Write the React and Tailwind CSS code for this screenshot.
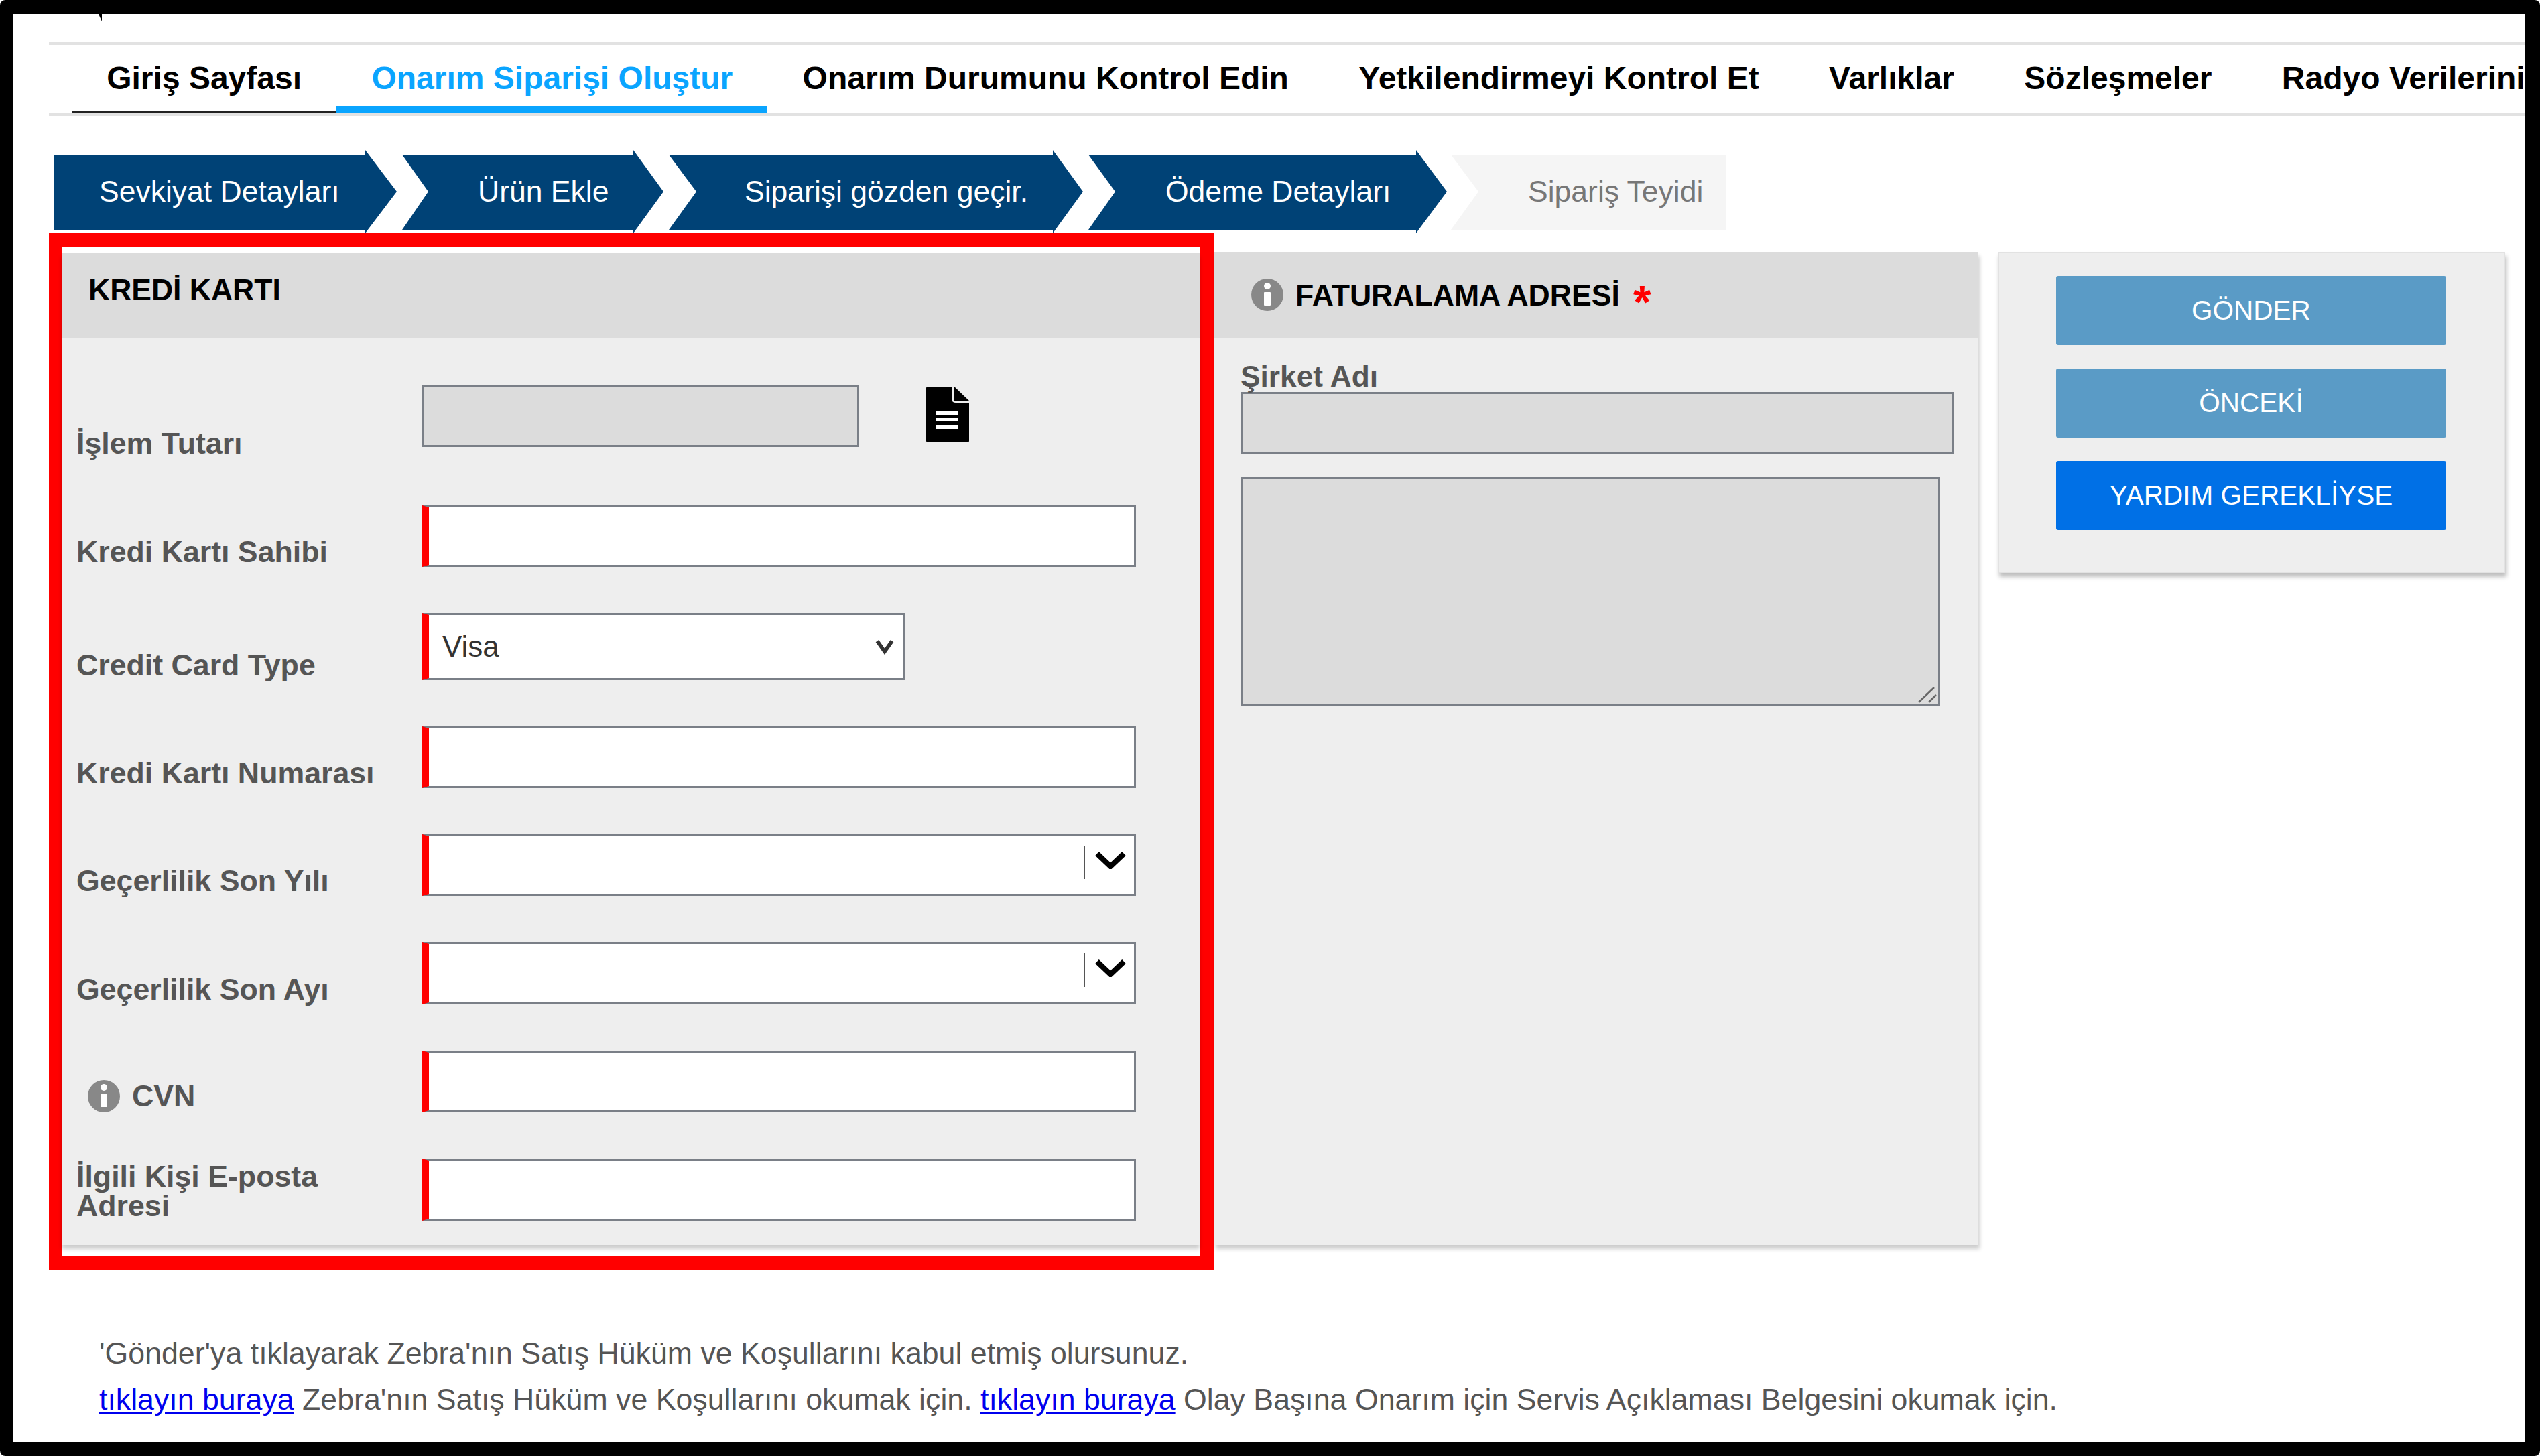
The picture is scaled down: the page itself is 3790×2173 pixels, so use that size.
import React from 'react'

const tabs = [
  { name: 'Giriş Sayfası', cls: 'border-b-[4px] border-[#222222] text-black' },
  { name: 'Onarım Siparişi Oluştur', cls: 'h-[102px] border-b-[11px] border-[#0aa5ff] text-[#0aa5ff]' },
  { name: 'Onarım Durumunu Kontrol Edin', cls: 'text-black' },
  { name: 'Yetkilendirmeyi Kontrol Et', cls: 'text-black' },
  { name: 'Varlıklar', cls: 'text-black' },
  { name: 'Sözleşmeler', cls: 'text-black' },
  { name: 'Radyo Verilerini', cls: 'text-black' },
]

const InfoIcon = () => (
  <svg viewBox="0 0 48 48" className="w-[48px] h-[48px] shrink-0">
    <circle cx="24" cy="24" r="24" fill="#888888" />
    <circle cx="24" cy="11" r="5" fill="#ffffff" />
    <rect x="19" y="20" width="10" height="20" rx="1" fill="#ffffff" />
  </svg>
)

const DocIcon = () => (
  <svg viewBox="0 0 64 83" className="w-[64px] h-[83px] ml-[100px] mt-[2px] shrink-0">
    <path d="M2 0H38V18Q38 24 44 24H64V81Q64 83 62 83H2Q0 83 0 81V2Q0 0 2 0Z" fill="#000000" />
    <path d="M42 0L64 21H42Z" fill="#000000" />
    <rect x="15" y="37" width="33" height="5" fill="#ffffff" />
    <rect x="15" y="47" width="33" height="5" fill="#ffffff" />
    <rect x="15" y="58" width="33" height="5" fill="#ffffff" />
  </svg>
)

const Chevron = ({ className }) => (
  <svg viewBox="0 0 46 26" className={className} fill="none" stroke="#000000" strokeWidth="8">
    <path d="M3 3L23 22L43 3" />
  </svg>
)

const inputCls = 'border-[3px] border-[#7a7f87] border-l-[10px] border-l-[#ff0000] bg-white outline-none'

const Row = ({ label, h, labelCls, rowCls, children }) => (
  <div className={`flex items-end ${rowCls || ''}`}>
    <div className={`w-[538px] shrink-0 pl-[22px] text-[44.7px] leading-[44px] font-bold text-[#555555] ${labelCls || ''}`}>{label}</div>
    <div className={`flex items-start ${h}`}>{children}</div>
  </div>
)

const Combo = () => (
  <div className="relative w-[1065px] h-full">
    <input className={`w-full h-full ${inputCls}`} />
    <div className="absolute left-[987px] top-[17px] w-[2px] h-[50px] bg-[#555555]" />
    <Chevron className="absolute left-[1004px] top-[26px] w-[46px] h-[26px]" />
  </div>
)

const App = () => {
  return (
    <div className="w-[3790px] h-[2173px] bg-white font-['Liberation_Sans',Arial,sans-serif]">
      <div className="w-full h-full rounded-[8px] border-t-[21px] border-l-[20px] border-r-[22px] border-b-[21px] border-black overflow-hidden">
        {/* top strip, only a bit of the cut off logo is left */}
        <div className="h-[42px] pl-[127px]">
          <div className="w-[5px] h-[11px] bg-black [clip-path:polygon(0_0,100%_0,100%_100%)]" />
        </div>
        <div className="ml-[53px] h-[4px] bg-[#e2e2e2]" />

        {/* nav */}
        <div className="ml-[53px] pl-[34px] flex h-[102px] overflow-hidden">
          {tabs.map((t) => (
            <div key={t.name} className={`shrink-0 h-[102px] px-[52.2px] pt-[25px] text-[48px] leading-[50px] font-bold whitespace-nowrap ${t.cls}`}>
              {t.name}
            </div>
          ))}
        </div>
        <div className="ml-[53px] h-[4px] bg-[#e2e2e2]" />

        {/* steps */}
        <div className="ml-[60px] mt-[51px] flex gap-[8px] h-[124px] text-[44.5px] whitespace-nowrap">
          <div className="w-[512px] pl-[68px] flex items-center bg-[#004276] text-white [clip-path:polygon(0_7px,465px_7px,465px_0,512px_62px,465px_124px,465px_119px,0_119px)]">Sevkiyat Detayları</div>
          <div className="w-[390px] pl-[113px] flex items-center bg-[#004276] text-white [clip-path:polygon(0_7px,345px_7px,345px_0,390px_62px,345px_124px,345px_119px,0_119px,39px_62px)]">Ürün Ekle</div>
          <div className="w-[618px] pl-[113px] flex items-center bg-[#004276] text-white [clip-path:polygon(0_7px,573px_7px,573px_0,618px_62px,573px_124px,573px_119px,0_119px,41px_62px)]">Siparişi gözden geçir.</div>
          <div className="w-[535px] pl-[115px] flex items-center bg-[#004276] text-white [clip-path:polygon(0_7px,489px_7px,489px_0,535px_62px,489px_124px,489px_119px,0_119px,40px_62px)]">Ödeme Detayları</div>
          <div className="w-[410px] -ml-[2px] pl-[115px] flex items-center bg-[#f5f5f5] text-[#777777] [clip-path:polygon(0_7px,410px_7px,410px_119px,0_119px,41px_62px)]">Sipariş Teyidi</div>
        </div>

        <div className="ml-[53px] flex items-start">
          {/* credit card, the red box is the annotation from the screenshot */}
          <div className="w-[1739px] h-[1547px] shrink-0 border-t-[21px] border-l-[19px] border-r-[22px] border-b-[20px] border-[#ff0000] pt-[8px]">
            <div className="h-[1481px] bg-[#eeeeee] shadow-[0_6px_6px_rgba(0,0,0,0.2)]">
              <div className="h-[128px] bg-[#dcdcdc] pl-[40px] pt-[34px] text-[44.5px] leading-[44px] font-bold text-black">KREDİ KARTI</div>
              <div className="flex flex-col pt-[70px] gap-[69px]">
                <Row label="İşlem Tutarı" h="h-[92px]" rowCls="mb-[18px]" labelCls="-mb-[17px]">
                  <input disabled className="w-[652px] h-full border-[3px] border-[#7a7f87] bg-[#dcdcdc]" />
                  <DocIcon />
                </Row>
                <Row label="Kredi Kartı Sahibi" h="h-[92px]">
                  <input className={`w-[1065px] h-full ${inputCls}`} />
                </Row>
                <Row label="Credit Card Type" h="h-[100px]">
                  <div className="relative w-[721px] h-full">
                    <select defaultValue="Visa" className={`w-full h-full appearance-none pl-[20px] text-[44px] text-[#333333] ${inputCls}`}>
                      <option>Visa</option>
                    </select>
                    <svg viewBox="0 0 30 26" className="absolute left-[675px] top-[38px] w-[30px] h-[24px]" fill="none" stroke="#333333" strokeWidth="6">
                      <path d="M3 4L15 21L27 4" />
                    </svg>
                  </div>
                </Row>
                <Row label="Kredi Kartı Numarası" h="h-[92px]">
                  <input className={`w-[1065px] h-full ${inputCls}`} />
                </Row>
                <Row label="Geçerlilik Son Yılı" h="h-[92px]"><Combo /></Row>
                <Row label="Geçerlilik Son Ayı" h="h-[93px]"><Combo /></Row>
                <Row
                  label={
                    <span className="flex items-center gap-[18px] pl-[17px]">
                      <InfoIcon />
                      CVN
                    </span>
                  }
                  h="h-[92px]"
                >
                  <input className={`w-[1065px] h-full ${inputCls}`} />
                </Row>
                <Row label={<>İlgili Kişi E-posta<br />Adresi</>} h="h-[93px]">
                  <input className={`w-[1065px] h-full ${inputCls}`} />
                </Row>
              </div>
            </div>
          </div>

          {/* billing address */}
          <div className="mt-[28px] w-[1140px] h-[1482px] shrink-0 bg-[#eeeeee] shadow-[2px_6px_6px_rgba(0,0,0,0.2)]">
            <div className="h-[129px] bg-[#dcdcdc] pl-[55px] flex items-start pt-[40px] text-[44.6px] leading-[50px] font-bold text-black">
              <InfoIcon />
              <span className="ml-[18px]">FATURALAMA ADRESİ</span>
              <span className="ml-[20px] text-[68px] leading-[68px] text-[#ff0000]">*</span>
            </div>
            <div className="pl-[39px] pt-[35px]">
              <div className="text-[44.3px] leading-[44px] font-bold text-[#555555]">Şirket Adı</div>
              <input disabled className="block mt-[1px] w-[1064px] h-[92px] border-[3px] border-[#7a7f87] bg-[#dcdcdc]" />
              <div className="relative mt-[35px] w-[1044px] h-[342px]">
                <textarea readOnly className="block w-full h-full resize-none border-[3px] border-[#7a7f87] bg-[#dcdcdc] outline-none" />
                <svg viewBox="0 0 28 24" className="absolute right-[5px] bottom-[5px] w-[28px] h-[24px]" fill="none" stroke="#666666" strokeWidth="2.5">
                  <path d="M1 23L24 1M16 23L27 12" />
                </svg>
              </div>
            </div>
          </div>

          {/* actions */}
          <div className="mt-[28px] ml-[29px] w-[757px] h-[479px] shrink-0 bg-[#eeeeee] border-[2px] border-[#e2e2e2] shadow-[2px_6px_6px_rgba(0,0,0,0.25)] pt-[34px] pl-[85px] flex flex-col gap-[35px]">
            <button className="w-[582px] h-[103px] rounded-[3px] bg-[#5a9bc6] text-white text-[40.5px]">GÖNDER</button>
            <button className="w-[582px] h-[103px] rounded-[3px] bg-[#5a9bc6] text-white text-[40.5px]">ÖNCEKİ</button>
            <button className="w-[582px] h-[103px] rounded-[3px] bg-[#0070e6] text-white text-[40.5px]">YARDIM GEREKLİYSE</button>
          </div>
        </div>

        {/* footer text */}
        <div className="ml-[128px] mt-[90px] text-[44.7px] leading-[69px] text-[#555555] whitespace-nowrap">
          <p>'Gönder'ya tıklayarak Zebra'nın Satış Hüküm ve Koşullarını kabul etmiş olursunuz.</p>
          <p>
            <a href="#" className="text-[#0000ee] underline">tıklayın buraya</a> Zebra'nın Satış Hüküm ve Koşullarını okumak için.{' '}
            <a href="#" className="text-[#0000ee] underline">tıklayın buraya</a> Olay Başına Onarım için Servis Açıklaması Belgesini okumak için.
          </p>
        </div>
      </div>
    </div>
  )
}

export default App
